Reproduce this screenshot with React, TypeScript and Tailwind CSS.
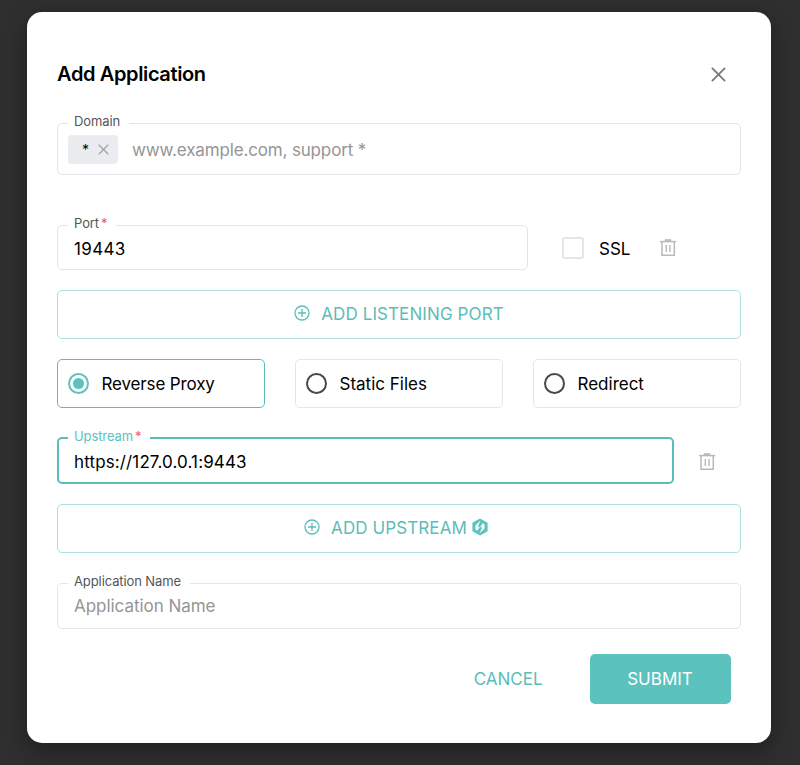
import { useState, type ReactNode } from "react";

const MODES = ["Reverse Proxy", "Static Files", "Redirect"];

function CloseIcon({ className }: { className?: string }) {
  return (
    <svg viewBox="0 0 16 16" className={className} fill="none" stroke="currentColor" strokeLinecap="round">
      <path d="M1.5 1.5l13 13M14.5 1.5l-13 13" />
    </svg>
  );
}

function TrashIcon() {
  return (
    <svg width="18" height="18" viewBox="0 0 18 18" fill="none" stroke="#b9b9b9" strokeWidth="1.5">
      <path d="M1 2.6h16.2" />
      <path d="M5.8 1.1h6.4" strokeWidth="1.8" />
      <path d="M3 2.6v13.6h12.3V2.6" />
      <path d="M7.3 6.1v6.8M11 6.1v6.8" strokeWidth="1.4" />
    </svg>
  );
}

function PlusCircleIcon() {
  return (
    <svg width="16" height="16" viewBox="0 0 16 16" fill="none" stroke="currentColor" strokeWidth="1.3">
      <circle cx="8" cy="8" r="7" />
      <path d="M8 4v8M4 8h8" />
    </svg>
  );
}

function HexBoltIcon() {
  return (
    <svg width="16" height="18" viewBox="0 0 16 18">
      <path d="M8 .5l7.6 4.2v8.6L8 17.5.4 13.3V4.7z" fill="#5bc2be" />
      <path
        d="M8.6 2.6L3.4 7.6v4l1.9 1.1 2.6-3.9H5.7zM7.4 15.4l5.2-5V6.4l-1.9-1.1-2.6 3.9h2.2z"
        fill="#fff"
      />
    </svg>
  );
}

function Field({
  label,
  required,
  focused,
  className,
  children,
}: {
  label: string;
  required?: boolean;
  focused?: boolean;
  className: string;
  children: ReactNode;
}) {
  return (
    <fieldset
      className={[
        "min-w-0 rounded-[5px]",
        focused ? "border-[2.5px] border-[#5bbdb9] pl-[15px]" : "border-[1.5px] border-[#e3e5ea] pl-4",
        className,
      ].join(" ")}
    >
      <legend
        className={[
          "-ml-1.5 flex h-5 items-start gap-[2px] pr-[9px] pl-1.5 text-[13px] leading-4 tracking-[-0.1px]",
          focused ? "text-[#5bc2be]" : "text-[#555]",
        ].join(" ")}
      >
        {label}
        {required && <span className="text-[#e5605c]">*</span>}
      </legend>
      {children}
    </fieldset>
  );
}

function AddButton({ children }: { children: ReactNode }) {
  return (
    <button
      type="button"
      className="flex h-[49px] w-full items-center justify-center rounded-[5px] border-[1.5px] border-[#ade0de] pb-[3px] text-[17px] tracking-[0.1px] text-[#5bbdb9]"
    >
      <PlusCircleIcon />
      {children}
    </button>
  );
}

export default function App() {
  const [mode, setMode] = useState(MODES[0]);

  return (
    <div className="h-[765px] w-[800px] overflow-hidden bg-[#2f2f2f] pt-3 pl-[27px] font-['Inter','Liberation_Sans',sans-serif] text-[17px] text-black">
      <div className="flex h-[731px] w-[743.5px] flex-col rounded-[15px] bg-white pr-[29.5px] pl-[30px] shadow-[0_8px_24px_rgba(0,0,0,0.35)]">
        <div className="mt-[47px] flex h-[30px] items-center justify-between pr-[15px]">
          <h2 className="text-[20px] font-semibold tracking-[-0.37px]">Add Application</h2>
          <button type="button" aria-label="Close">
            <CloseIcon className="h-[15px] w-[15px] stroke-[1.9] text-[#777]" />
          </button>
        </div>

        <Field label="Domain" className="mt-6 h-[62px]">
          <div className="-ml-1.5 mt-0.5 flex h-[29px] items-center">
            <span className="flex h-[29px] w-[50px] items-center justify-between rounded bg-[#ebecef] pr-[9px] pl-3.5 text-sm">
              *
              <CloseIcon className="h-[11px] w-[11px] stroke-[1.7] text-[#a0a0a0]" />
            </span>
            <span className="ml-3.5 pt-0.5 tracking-[-0.15px] text-[#959595]">www.example.com, support *</span>
          </div>
        </Field>

        <div className="mt-10 flex items-start">
          <Field label="Port" required className="h-[55px] w-[471px]">
            <div className="leading-7 tracking-[0.35px]">19443</div>
          </Field>
          <label className="mt-[22px] ml-[34px] flex h-[22px] items-center">
            <span className="h-[22px] w-[22px] rounded-[3px] border-2 border-[#e3e4ec]" />
            <span className="ml-[15px] pt-[3px]">SSL</span>
          </label>
          <button type="button" aria-label="Delete port" className="mt-6 ml-[29px]">
            <TrashIcon />
          </button>
        </div>

        <div className="mt-5">
          <AddButton>
            <span className="ml-[11px] pt-[3px]">ADD LISTENING PORT</span>
          </AddButton>
        </div>

        <div className="mt-5 grid grid-cols-3 gap-[30px]">
          {MODES.map((m) => (
            <button
              key={m}
              type="button"
              role="radio"
              aria-checked={m === mode}
              onClick={() => setMode(m)}
              className={[
                "flex h-[49px] items-center rounded-[5px] border-[1.5px] pl-[9.5px]",
                m === mode ? "border-[#5bbdb9] tracking-[-0.14px]" : "border-[#e3e5ea]",
              ].join(" ")}
            >
              <span
                className={[
                  "flex h-[21px] w-[21px] items-center justify-center rounded-full border-2",
                  m === mode ? "border-[#5bc2be]" : "border-[#484848]",
                ].join(" ")}
              >
                {m === mode && <span className="h-[11px] w-[11px] rounded-full bg-[#5bc2be]" />}
              </span>
              <span className="ml-[13px] pt-0.5">{m}</span>
            </button>
          ))}
        </div>

        <div className="mt-5 flex items-start">
          <Field label="Upstream" required focused className="h-[56px] w-[617px]">
            <div className="leading-7 tracking-[0.13px]">https://127.0.0.1:9443</div>
          </Field>
          <button type="button" aria-label="Delete upstream" className="mt-[25px] ml-6">
            <TrashIcon />
          </button>
        </div>

        <div className="mt-5">
          <AddButton>
            <span className="mr-[5px] ml-[11px] pt-[3px]">ADD UPSTREAM</span>
            <span className="mr-1.5">
              <HexBoltIcon />
            </span>
          </AddButton>
        </div>

        <Field label="Application Name" className="mt-5 h-[56px]">
          <div className="leading-[26px] tracking-[-0.04px] text-[#959595]">Application Name</div>
        </Field>

        <div className="mt-[25px] flex justify-end pr-[10.5px]">
          <button type="button" className="mr-[47px] pt-0.5 text-[#5bbdb9]">CANCEL</button>
          <button type="button" className="h-[50px] w-[141px] rounded-[5px] bg-[#5bc2be] pt-0.5 text-white">
            SUBMIT
          </button>
        </div>
      </div>
    </div>
  );
}
